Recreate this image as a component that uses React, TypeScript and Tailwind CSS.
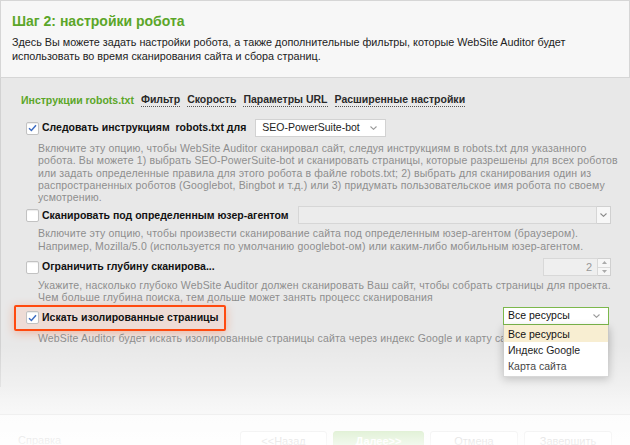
import React from 'react'

const TABS = ['Фильтр', 'Скорость', 'Параметры URL', 'Расширенные настройки']

function Check({ checked }: { checked?: boolean }) {
  return (
    <div className="w-[13px] h-[13px] shrink-0 bg-white border border-[#c2c2c2] rounded-[2px] flex items-center justify-center shadow-[inset_0_1px_1px_rgba(0,0,0,0.08)]">
      {checked && (
        <svg width="9" height="8" viewBox="0 0 9 8">
          <path d="M1 4.2 L3.4 6.5 L8 1.2" fill="none" stroke="#3d6cc2" strokeWidth="1.5" />
        </svg>
      )}
    </div>
  )
}

function Chevron({ color = '#9a9a9a' }: { color?: string }) {
  return (
    <svg width="7" height="4" viewBox="0 0 7 4">
      <path d="M0.5 0.5 L3.5 3.3 L6.5 0.5" fill="none" stroke={color} strokeWidth="1.1" />
    </svg>
  )
}

function Desc({ lines, className = '' }: { lines: string[]; className?: string }) {
  return (
    <div className={`pl-[37px] text-[10.5px] leading-[12.3px] text-[#8e8e8e] tracking-[0.15px] ${className}`}>
      {lines.map(l => (
        <div key={l}>{l}</div>
      ))}
    </div>
  )
}

export default function App() {
  return (
    <div className="relative w-[630px] h-[445px] overflow-hidden bg-[#e8e8e8] font-['Liberation_Sans',Arial,sans-serif] whitespace-nowrap">
      {/* header */}
      <div className="h-[78px] bg-[#f7f7f7] border border-[#d6d6d6] px-[11px] pt-[10px]">
        <div className="text-[14px] font-bold text-[#5ba629] leading-[20px]">Шаг 2: настройки робота</div>
        <div className="mt-[4px] text-[10.8px] leading-[14px] text-[#222]">
          <div>Здесь Вы можете задать настройки робота, а также дополнительные фильтры, которые WebSite Auditor будет</div>
          <div>использовать во время сканирования сайта и сбора страниц.</div>
        </div>
      </div>

      {/* body */}
      <div className="h-[309px] border-l border-[#d2d2d2] pt-[14px]">
        <div className="flex items-center gap-[7px] pl-[20px] text-[10.5px] leading-[16px]">
          <span className="text-[#5ba629] font-bold">Инструкции robots.txt</span>
          {TABS.map(t => (
            <span key={t} className="font-bold text-[#2a2a2a] border-b border-dotted border-[#555] leading-[13px]">{t}</span>
          ))}
        </div>

        <div className="mt-[10px] flex items-center h-[20px] pl-[25px]">
          <Check checked />
          <span className="ml-[3px] text-[10.5px] font-bold text-[#111] whitespace-pre">Следовать инструкциям  robots.txt для</span>
          <div className="ml-[9px] w-[131px] h-[18px] bg-white border border-[#d2d2d2] flex items-center justify-between pl-[6px] pr-[8px] text-[10.5px] text-[#222]">
            <span>SEO-PowerSuite-bot</span>
            <Chevron />
          </div>
        </div>
        <Desc
          className="mt-[4px]"
          lines={[
            'Включите эту опцию, чтобы WebSite Auditor сканировал сайт, следуя инструкциям в robots.txt для указанного',
            'робота. Вы можете 1) выбрать SEO-PowerSuite-bot и сканировать страницы, которые разрешены для всех роботов',
            'или задать определенные правила для этого робота в файле robots.txt; 2) выбрать для сканирования один из',
            'распространенных роботов (Googlebot, Bingbot и т.д.) или 3) придумать пользовательское имя робота по своему',
            'усмотрению.',
          ]}
        />

        <div className="mt-[2px] flex items-center h-[20px] pl-[25px]">
          <Check />
          <span className="ml-[3px] text-[10.5px] font-bold text-[#111]">Сканировать под определенным юзер-агентом</span>
          <div className="ml-auto mr-[19px] w-[313px] h-[18px] flex">
            <div className="flex-1 bg-[#ececec] border border-[#d6d6d6]" />
            <div className="w-[14px] bg-[#f7f7f7] border border-l-0 border-[#d0d0d0] flex items-center justify-center">
              <Chevron color="#888" />
            </div>
          </div>
        </div>
        <Desc
          className="mt-[2px]"
          lines={[
            'Включите эту опцию, чтобы произвести сканирование сайта под определенным юзер-агентом (браузером).',
            'Например, Mozilla/5.0 (используется по умолчанию googlebot-ом) или каким-либо мобильным юзер-агентом.',
          ]}
        />

        <div className="mt-[5px] flex items-center h-[20px] pl-[25px]">
          <Check />
          <span className="ml-[3px] text-[10.5px] font-bold text-[#111]">Ограничить глубину сканирова...</span>
          <div className="ml-auto mr-[19px] h-[18px] flex">
            <div className="w-[55px] bg-[#efefef] border border-[#d8d8d8] text-[11px] text-[#999] text-right pr-[5px] leading-[16px]">2</div>
            <div className="w-[13px] flex flex-col border border-l-0 border-[#d0d0d0] bg-[#f6f6f6]">
              <div className="flex-1 flex items-center justify-center border-b border-[#dadada]">
                <svg width="5" height="3" viewBox="0 0 5 3"><path d="M0 3 L2.5 0 L5 3Z" fill="#aaa" /></svg>
              </div>
              <div className="flex-1 flex items-center justify-center">
                <svg width="5" height="3" viewBox="0 0 5 3"><path d="M0 0 L2.5 3 L5 0Z" fill="#aaa" /></svg>
              </div>
            </div>
          </div>
        </div>
        <Desc
          className="mt-[2px]"
          lines={[
            'Укажите, насколько глубоко WebSite Auditor должен сканировать Ваш сайт, чтобы собрать страницы для проекта.',
            'Чем больше глубина поиска, тем дольше может занять процесс сканирования',
          ]}
        />

        <div className="mt-[1px] flex items-center h-[26px] pl-[13px]">
          <div className="w-[212px] h-[26px] flex items-center pl-[10px] bg-[#eedcd6] border-2 border-[#ff4a0f] rounded-[2px] shadow-[0_2px_10px_rgba(255,90,30,0.35)]">
            <Check checked />
            <span className="ml-[3px] text-[10.5px] font-bold text-[#111]">Искать изолированные страницы</span>
          </div>
        </div>
        <Desc className="mt-[1px]" lines={['WebSite Auditor будет искать изолированные страницы сайта через индекс Google и карту сайта']} />
      </div>

      {/* dropdown over content */}
      <div className="absolute left-[503px] top-[307px] w-[106px]">
        <div className="h-[18px] bg-white border border-[#7cb84c] flex items-center justify-between pl-[4px] pr-[8px] text-[10.5px] text-[#111]">
          <span>Все ресурсы</span>
          <Chevron />
        </div>
        <div className="bg-white border border-[#c8c8c8] border-t-0 shadow-[0_3px_8px_rgba(0,0,0,0.25)] text-[10.5px] text-[#111] leading-[16px] pb-[2px]">
          <div className="bg-[#f8eed2] px-[4px] py-[0.5px]">Все ресурсы</div>
          <div className="px-[4px]">Индекс Google</div>
          <div className="px-[4px]">Карта сайта</div>
        </div>
      </div>

      {/* footer */}
      <div className="h-[28px] bg-gradient-to-b from-[#e8e8e8] to-[#eeeeee] border-b border-[#d8d8d8]" />
      <div className="h-[30px] bg-[#f8f8f8] flex items-end px-[18px] text-[11px]">
        <span className="text-[#8a8a8a] mb-[-3px]">Справка</span>
        <div className="ml-auto flex gap-[6px] translate-y-[6px]">
          <div className="w-[87px] h-[20px] border border-[#ccc] bg-white rounded-[3px] text-center text-[#666] leading-[18px]">&lt;&lt;Назад</div>
          <div className="w-[91px] h-[20px] border border-[#7cbf4a] bg-[#7fc552] rounded-[3px] text-center text-white font-bold leading-[18px]">Далее&gt;&gt;</div>
          <div className="w-[88px] h-[20px] border border-[#ccc] bg-white rounded-[3px] text-center text-[#666] leading-[18px]">Отмена</div>
          <div className="w-[88px] h-[20px] border border-[#ccc] bg-white rounded-[3px] text-center text-[#666] leading-[18px]">Завершить</div>
        </div>
      </div>

      {/* fade overlay */}
      <div className="absolute left-0 right-0 bottom-0 h-[100px] bg-gradient-to-b from-transparent via-white/45 to-white/90 pointer-events-none" />
    </div>
  )
}
